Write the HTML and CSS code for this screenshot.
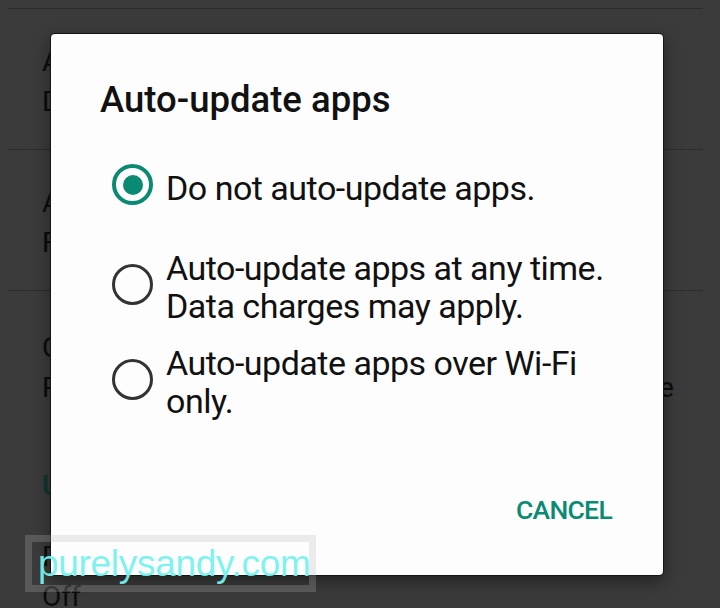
FILE: index.html
```html
<!DOCTYPE html>
<html lang="en">
<head>
  <meta charset="UTF-8" />
  <meta name="viewport" content="width=device-width, initial-scale=1.0"/>
  <title>Settings</title>
  <link rel="stylesheet" href="styles.css">
</head>
<body>

  <!-- Settings list (dimmed behind the dialog) -->
  <div class="settings">
    <div class="setting">
      <p class="setting-title">Auto-update apps</p>
      <p class="setting-sub">Do not auto-update apps</p>
    </div>
    <div class="setting">
      <p class="setting-title">Add icon to Home screen</p>
      <p class="setting-sub">For new apps</p>
    </div>
    <div class="setting setting-last">
      <p class="setting-title">Clear local search history</p>
      <p class="setting-sub">Remove all the searches you made from the device</p>
    </div>
    <p class="section-head">User controls</p>
    <div class="setting setting-plain">
      <p class="setting-title">Parental controls</p>
      <p class="setting-sub">Off</p>
    </div>
  </div>

  <!-- Dialog -->
  <div class="dialog">
    <h2>Auto-update apps</h2>
    <div class="options">
      <div class="option option-first">
        <span class="radio checked"></span>
        <span class="option-text">Do not auto-update apps.</span>
      </div>
      <div class="option">
        <span class="radio"></span>
        <span class="option-text">Auto-update apps at any time.<br>Data charges may apply.</span>
      </div>
      <div class="option">
        <span class="radio"></span>
        <span class="option-text">Auto-update apps over Wi-Fi<br>only.</span>
      </div>
    </div>
    <div class="dialog-actions">
      <button>CANCEL</button>
    </div>
  </div>

  <!-- Watermark -->
  <div class="watermark">
    <span>purelysandy.com</span>
  </div>

</body>
</html>
```

FILE: styles.css
```css
* {
  box-sizing: border-box;
  margin: 0;
  padding: 0;
}

body {
  font-family: Roboto, 'Noto Sans', sans-serif;
  background: #3b3b3b;
  color: #101010;
  width: 720px;
  height: 608px;
  overflow: hidden;
  position: relative;
}

/* Settings list */
.settings {
  padding-top: 8px;
}

.setting {
  margin: 0 17px 0 8px;
  border-top: 1px solid #2c2c2c;
  height: 141px;
  padding: 33px 0 0 34px;
}

.setting-last {
  height: 140px;
  padding-top: 37px;
}

.setting-plain {
  border-top: none;
  height: auto;
  padding-top: 31px;
}

.setting-title,
.setting-sub {
  font-size: 28px;
  line-height: 40px;
  white-space: nowrap;
  color: #0c0c0c;
}

.section-head {
  margin: 0 0 0 42px;
  padding-top: 36px;
  font-size: 28px;
  line-height: 40px;
  font-weight: 500;
  color: #0d3732;
}

/* Dialog */
.dialog {
  position: absolute;
  left: 51px;
  top: 34px;
  width: 612px;
  height: 541px;
  background: #fdfdfd;
  border-radius: 4px;
  padding: 44px 51px 0 49px;
  box-shadow: 0 0 0 1px #151515, 0 6px 18px rgba(0, 0, 0, 0.45);
}

.dialog h2 {
  font-size: 36.5px;
  line-height: 44px;
  font-weight: 500;
  color: #111;
}

.options {
  margin-top: 42px;
  padding-left: 12px;
  display: flex;
  flex-direction: column;
  gap: 19px;
}

.option {
  display: flex;
  align-items: center;
  gap: 13px;
}

.option-first {
  margin-bottom: 19px;
}

.radio {
  flex: none;
  width: 41px;
  height: 41px;
  border-radius: 50%;
  border: 3px solid #333;
  margin-bottom: 6px;
  position: relative;
}

.radio.checked {
  border: 4px solid #0b8a73;
}

.radio.checked::after {
  content: "";
  position: absolute;
  left: 6.5px;
  top: 6.5px;
  width: 20px;
  height: 20px;
  border-radius: 50%;
  background: #0b8a73;
}

.option-text {
  font-size: 34px;
  line-height: 38px;
  letter-spacing: -0.5px;
  color: #111;
}

.dialog-actions {
  display: flex;
  justify-content: flex-end;
  margin-top: 74px;
}

.dialog-actions button {
  background: none;
  border: none;
  font-family: Roboto, sans-serif;
  font-weight: 500;
  font-size: 26.5px;
  line-height: 32px;
  letter-spacing: -0.7px;
  color: #0b8a73;
}

/* Watermark */
.watermark {
  position: absolute;
  left: 25px;
  top: 535px;
  width: 291px;
  height: 57px;
  border: 7px solid rgba(184, 184, 184, 0.25);
  display: flex;
  align-items: center;
  padding-left: 6px;
}

.watermark span {
  font-family: 'Liberation Sans', Arial, sans-serif;
  font-size: 37px;
  color: rgba(118, 242, 238, 0.95);
  letter-spacing: -0.3px;
}
```
